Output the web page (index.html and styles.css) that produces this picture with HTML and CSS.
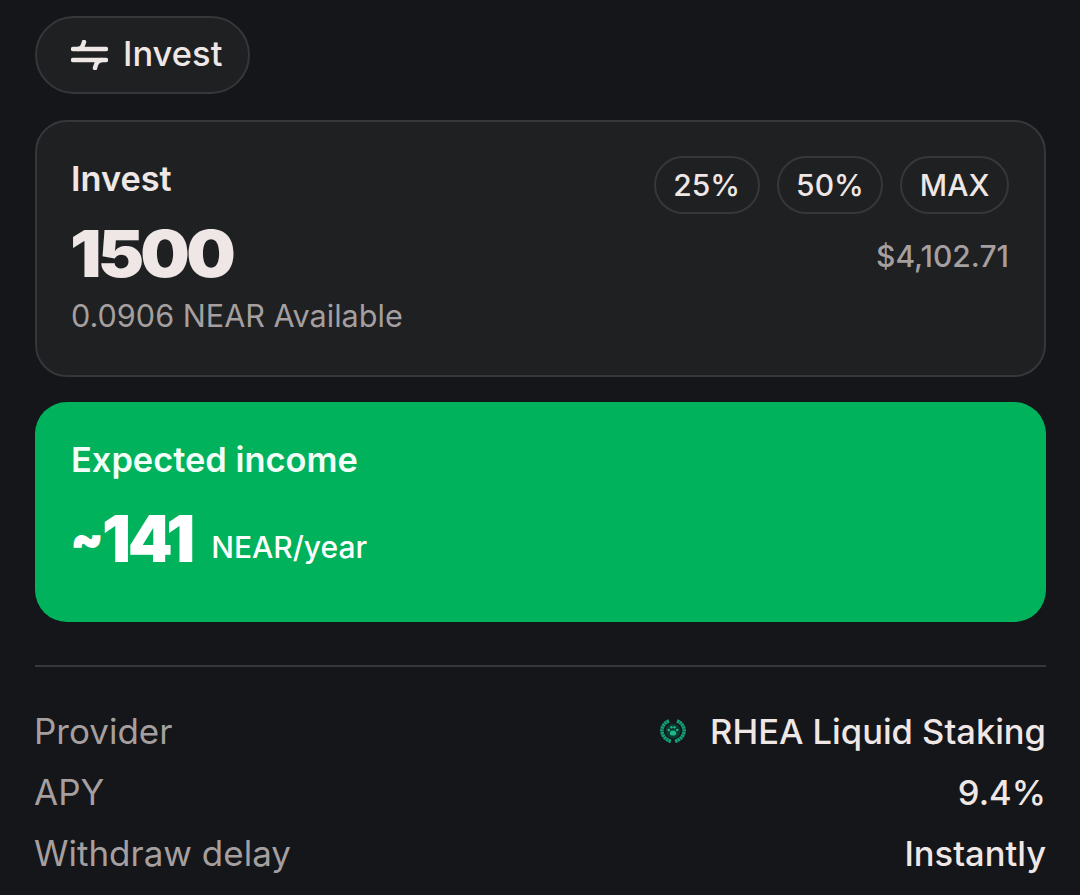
FILE: index.html
```html
<!DOCTYPE html>
<html lang="en">
<head>
<meta charset="utf-8">
<title>Invest</title>
<link rel="stylesheet" href="styles.css">
</head>
<body>
<main class="page">
  <div class="tab">
    <svg class="tab-icon" viewBox="0 0 37 30" fill="none" stroke="#efe6e6" stroke-width="4.500" stroke-linecap="round" aria-hidden="true">
      <path d="M2 9H35"/>
      <path d="M2 20H35"/>
      <path d="M7 9C10 9 12 6 13 2"/>
      <path d="M31 20C27 20 25 23 24 28"/>
    </svg>
    <span>Invest</span>
  </div>

  <section class="card">
    <div class="card-top">
      <div class="card-title">Invest</div>
      <div class="chips">
        <span class="chip">25%</span>
        <span class="chip">50%</span>
        <span class="chip">MAX</span>
      </div>
    </div>
    <div class="amount-row">
      <div class="amount">1500</div>
      <div class="usd">$4,102.71</div>
    </div>
    <div class="avail">0.0906 NEAR Available</div>
  </section>

  <section class="income">
    <div class="income-title">Expected income</div>
    <div class="income-row">
      <span class="income-value"><span class="tilde">~</span>141</span>
      <span class="income-unit">NEAR/year</span>
    </div>
  </section>

  <hr class="divider">

  <dl class="rows">
    <div class="row">
      <dt>Provider</dt>
      <dd class="provider">
        <svg class="logo" viewBox="0 0 26 24" aria-hidden="true">
          <path d="M9 2C3.800 4 1.500 8.500 2 12.500C2.500 17 5.500 20.500 11 22.500" fill="none" stroke="#12a27a" stroke-width="3.600" stroke-dasharray="2.400 .4"/>
          <path d="M17 2C22.200 4 24.500 8.500 24 12.500C23.500 17 20.500 20.500 15 22.500" fill="none" stroke="#12a27a" stroke-width="3.600" stroke-dasharray="2.400 .4"/>
          <circle cx="13" cy="12" r="7.500" fill="#0c3a30"/>
          <ellipse cx="13" cy="14" rx="3.200" ry="2.600" fill="#1cb98a"/>
          <circle cx="8.800" cy="11" r="1.200" fill="#1cb98a"/>
          <circle cx="11.500" cy="8.300" r="1.200" fill="#1cb98a"/>
          <circle cx="14.500" cy="8.300" r="1.200" fill="#1cb98a"/>
          <circle cx="17.200" cy="11" r="1.200" fill="#1cb98a"/>
        </svg>
        <span>RHEA Liquid Staking</span>
      </dd>
    </div>
    <div class="row"><dt>APY</dt><dd>9.4%</dd></div>
    <div class="row"><dt>Withdraw delay</dt><dd>Instantly</dd></div>
  </dl>
</main>
</body>
</html>
```
FILE: styles.css
```css
* { box-sizing: border-box; }
html, body { margin: 0; height: 100%; }
body {
  background: #141619;
  color: #efe6e6;
  font-family: Inter, "Liberation Sans", sans-serif;
  overflow: hidden;
}
.page { padding: 16px 34px 0 35px; display: flex; flex-direction: column; }
.tab {
  align-self: flex-start;
  display: flex;
  align-items: center;
  gap: 15px;
  height: 78px;
  width: 215px;
  padding: 0 0 4px 34px;
  border: 2px solid #35373a;
  border-radius: 39px;
  background: #1e2022;
  font-size: 34.500px;
  font-weight: 500;
}
.tab-icon { width: 37px; height: 30px; flex: none; margin-top: 4px; }
.card {
  margin-top: 26px;
  height: 257px;
  padding: 34px 35px 0 34px;
  border: 2px solid #35373a;
  border-radius: 32px;
  background: #1e2022;
}
.card-top { display: flex; justify-content: space-between; align-items: flex-start; }
.card-title { font-size: 34.300px; font-weight: 600; line-height: 44px; margin-top: 1px; }
.chips { display: flex; gap: 17px; }
.chip {
  height: 58px;
  padding: 0 17.500px;
  display: flex;
  align-items: center;
  border: 2px solid #35373a;
  border-radius: 29px;
  font-size: 30px;
  font-weight: 500;
}
.amount-row { display: flex; justify-content: space-between; align-items: center; margin-top: 4px; }
.amount {
  font-size: 64px;
  font-weight: 900;
  line-height: 72px;
  letter-spacing: -3.500px;
  margin-left: -1px;
  transform: scaleX(1.09);
  transform-origin: left center;
}
.usd { font-size: 30px; color: #a59f9f; font-weight: 500; margin-top: 4px; }
.avail { font-size: 30.600px; color: #a59f9f; line-height: 40px; margin-top: 6px; }
.income {
  margin-top: 25px;
  height: 220px;
  padding: 36px 36px 0;
  border-radius: 32px;
  background: #00b25b;
  color: #fff;
}
.income-title { font-size: 34.400px; font-weight: 600; line-height: 44px; color: #f2fff8; }
.income-row { display: flex; align-items: flex-end; gap: 19px; margin-top: 21px; }
.income-value { font-size: 64px; font-weight: 900; line-height: 72px; letter-spacing: -3px; }
.tilde {
  font-size: 46px;
  line-height: 1;
  letter-spacing: -1px;
  vertical-align: 7px;
  -webkit-text-stroke: 1.500px #fff;
}
.income-unit { font-size: 30px; font-weight: 500; padding-bottom: 10.500px; }
.divider { margin: 43px 0 0; border: 0; border-top: 2px solid #35373a; }
.rows { margin: 41px 0 0; display: flex; flex-direction: column; gap: 15px; }
.row { display: flex; justify-content: space-between; align-items: center; height: 46px; font-size: 35px; }
.row dt { color: #a59f9f; margin-left: -1px; }
.row dd { margin: 0; font-size: 34.500px; font-weight: 500; }
.provider { display: flex; align-items: center; gap: 24px; }
.logo { width: 26px; height: 24px; flex: none; }
```
